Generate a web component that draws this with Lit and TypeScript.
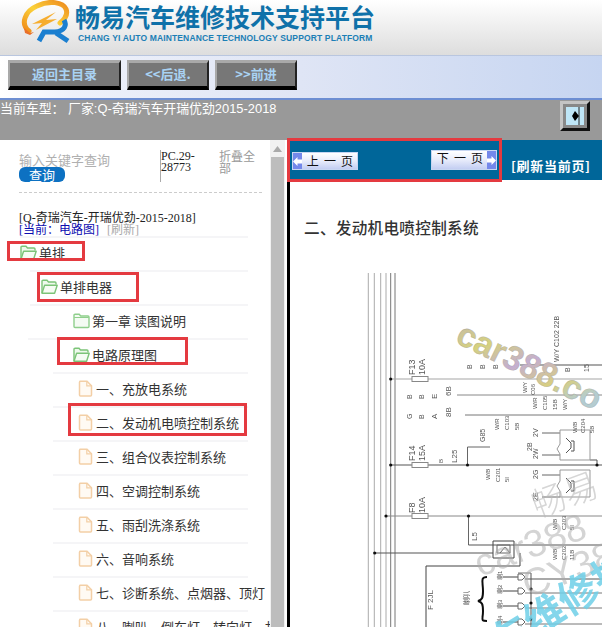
import { LitElement, html, css, svg } from "lit";
import { customElement } from "lit/decorators.js";

type Row = { t: string; kind: "open" | "closed" | "doc"; line: number; icon: number; red?: [number, number, number, number] };

const ROWS: Row[] = [
  { t: "单排", kind: "open", line: 20, icon: 19, red: [7, 5, 78, 20] },
  { t: "单排电器", kind: "open", line: 30, icon: 41, red: [37, 2, 102, 30] },
  { t: "第一章 读图说明", kind: "closed", line: 30, icon: 73 },
  { t: "电路原理图", kind: "open", line: 28, icon: 73, red: [57, -1, 131, 28] },
  { t: "一、充放电系统", kind: "doc", line: 53, icon: 77 },
  { t: "二、发动机电喷控制系统", kind: "doc", line: 53, icon: 77, red: [68, -3, 179, 33] },
  { t: "三、组合仪表控制系统", kind: "doc", line: 53, icon: 77 },
  { t: "四、空调控制系统", kind: "doc", line: 53, icon: 77 },
  { t: "五、雨刮洗涤系统", kind: "doc", line: 53, icon: 77 },
  { t: "六、音响系统", kind: "doc", line: 53, icon: 77 },
  { t: "七、诊断系统、点烟器、顶灯", kind: "doc", line: 53, icon: 77 },
  { t: "八、喇叭、倒车灯、转向灯、故障", kind: "doc", line: 53, icon: 77 },
];

const V_LINES = [368.3, 374.3, 380.7, 386, 390.7, 395];

// [x1, y1, x2, y2, stroke]
const WIRES: [number, number, number, number, string][] = [
  [390.7, 379, 602, 379, "#a5a5a5"],
  [457, 395, 602, 395, "#888"],
  [465, 415, 602, 415, "#777"],
  [520, 365, 602, 365, "#555"],
  [390.7, 465, 602, 465, "#555"],
  [386, 516, 602, 516, "#888"],
  [468.5, 516, 468.5, 545, "#666"],
  [468.5, 545, 602, 545, "#555"],
  [374.7, 553, 493, 553, "#555"],
  [467.5, 447, 467.5, 465, "#666"],
  [467.5, 447, 490, 447, "#666"],
  [542, 433, 560, 433, "#666"],
  [542, 455, 560, 455, "#666"],
  [542, 475, 560, 475, "#666"],
  [542, 497, 560, 497, "#666"],
  [597, 460, 597, 465, "#555"],
  [590, 460, 597, 460, "#555"],
  [503, 577, 518, 577, "#444"],
  [525, 579, 602, 579, "#555"],
  [503, 591, 518, 591, "#444"],
  [525, 593, 602, 593, "#777"],
  [503, 606, 518, 606, "#444"],
  [525, 608, 602, 608, "#777"],
  [503, 622, 518, 622, "#444"],
  [525, 624, 602, 624, "#777"],
  [531, 573, 531, 627, "#555"],
  [518, 573, 531, 573, "#777"],
];

const DOTS: [number, number][] = [
  [390.7, 379], [390.7, 465], [467.5, 465], [597, 465], [386, 516], [468.5, 516], [374.7, 553], [531, 589], [531, 603], [531, 619],
];

// [x, y, text, size]: labels that read upward, as on the drawing
const LABELS: [number, number, string, number][] = [
  [415, 375, "F13", 9], [425, 375, "10A", 9],
  [415, 461, "F14", 9], [425, 461, "15A", 9],
  [415, 513, "F8", 9], [425, 513, "10A", 9],
  [412, 399, "B", 7], [424, 399, "B", 7], [437, 399, "E", 8], [451, 396, "6B", 8],
  [412, 419, "G", 7], [424, 419, "B", 7], [437, 419, "A", 8], [451, 417, "8B", 8],
  [472, 369, "B", 7], [485, 369, "B", 7], [498, 369, "B", 7],
  [559, 362, "W/Y C102 22B", 7], [570, 372, "B", 7], [589, 372, "15", 7],
  [527, 393, "W/Y", 6], [535, 395, "C06", 6],
  [537, 409, "W/R", 6], [547, 410, "C105", 6], [557, 410, "15B", 6],
  [499, 430, "W/R", 6], [509, 430, "C103", 6], [519, 430, "5B", 6],
  [567, 410, "W/Y", 6], [577, 433, "W/B", 6], [585, 433, "C204", 6], [594, 433, "5B", 6],
  [485, 442, "G85", 7], [532, 451, "2B", 7],
  [538, 437, "2V", 7], [538, 459, "2W", 7], [538, 479, "2G", 7], [538, 501, "2E", 7],
  [490, 480, "W/B", 6], [500, 482, "C201", 6], [509, 482, "5I", 6],
  [457, 463, "L25", 8], [443, 463, "B", 6], [477, 541, "L5", 8],
  [557, 530, "W/B", 6], [566, 530, "C203", 6], [574, 530, "5I", 6],
  [557, 560, "W/B", 6], [566, 560, "C202", 6], [574, 560, "11B", 6],
  [433, 610, "F 2JL", 8], [469, 605, "喇叭", 7],
  [502, 580, "喇1", 6], [502, 594, "喇2", 6], [502, 609, "喇3", 6], [502, 625, "喇4", 6],
];

@customElement("app-root")
export class AppRoot extends LitElement {
  static styles = css`
    :host {
      display: block;
      width: 602px;
      height: 627px;
      overflow: hidden;
      background: #fff;
      font-family: "Noto Sans CJK SC", "Liberation Sans", sans-serif;
    }
    .header {
      height: 55px;
      display: flex;
      background: linear-gradient(#fff, #dddddd);
    }
    .logo { margin-left: 15px; flex: none; width: 60px; height: 45px; }
    .brand { display: flex; flex-direction: column; padding-top: 1px; }
    .brand-cn {
      font-size: 25px;
      line-height: 30px;
      font-weight: 700;
      color: #0f71a9;
      white-space: nowrap;
    }
    .brand-en {
      margin: 2px 0 0 3px;
      font: 700 8.5px/10px "Liberation Sans", sans-serif;
      color: #1c7fb6;
      letter-spacing: 0.14px;
      white-space: nowrap;
    }
    .toolbar {
      height: 43px;
      border-bottom: 2px solid #6d8ed2;
      display: flex;
      gap: 6px;
      padding-left: 8px;
      align-items: flex-start;
      background: linear-gradient(90deg, #fff 0%, #eef1fa 12%, #dfe5f5 50%, #c6d5f1 100%);
      box-shadow: inset 0 1px 0 #b9c6df;
    }
    .tbtn {
      margin-top: 5px;
      height: 30px;
      box-sizing: border-box;
      display: flex;
      align-items: center;
      justify-content: center;
      padding-bottom: 2px;
      background: #777;
      border-style: solid;
      border-width: 3px 2px 4px 2px;
      border-color: #a9a9a9 #222 #000 #a9a9a9;
      color: #a9d2f3;
      font-weight: 700;
      font-size: 13px;
    }
    .w1 { width: 113px; }
    .w2 { width: 82px; }
    .info {
      height: 40px;
      background: #999;
      display: flex;
      justify-content: space-between;
      align-items: flex-start;
    }
    .info-text {
      font: 12.9px/18px "Liberation Sans", "Noto Sans CJK SC", sans-serif;
      color: #fff;
      white-space: nowrap;
    }
    .toggle {
      margin: 1px 12px 0 0;
      width: 30px;
      height: 30px;
      box-sizing: border-box;
      border-style: solid;
      border-width: 3px;
      border-color: #c4c4c4 #111 #111 #c4c4c4;
      background: #888;
      padding: 3px;
    }
    .toggle svg { display: block; width: 18px; height: 18px; }
    .body { display: flex; height: 487px; }
    .left {
      width: 270px;
      flex: none;
      overflow: hidden;
      position: relative;
    }
    .search {
      display: flex;
      height: 32px;
      margin-top: 10px;
      padding-left: 19px;
    }
    .query { width: 141px; flex: none; }
    .ph { font-size: 13px; line-height: 14px; color: #b0b0b0; margin-top: 3px; }
    .qbtn {
      width: 46px;
      height: 15px;
      background: #0d71c2;
      border-radius: 6px;
      color: #fff;
      font-size: 13px;
      line-height: 15px;
      text-align: center;
    }
    .pc {
      width: 59px;
      flex: none;
      box-sizing: border-box;
      border-left: 1px solid #aaa;
      padding: 1px 0 0 0;
      font: 12px/11px "Liberation Serif", serif;
      color: #222;
    }
    .fold { width: 38px; font-size: 12px; line-height: 12px; color: #999; }
    .dash { margin: 10px 8px 0 19px; border-top: 1px dashed #ccc; }
    .path {
      margin: 19px 0 0 19px;
      font: 12px/12px "Liberation Serif", "Noto Sans CJK SC", serif;
      color: #222;
      white-space: nowrap;
      height: 24px;
    }
    .cur { color: #0c0cb0; }
    .ref { color: #aaa; margin-left: 8px; }
    .row {
      position: relative;
      height: 34px;
      box-sizing: border-box;
      border-top: 2px solid #f5f5f7;
      padding-bottom: 4px;
      margin-right: 22px;
      display: flex;
      align-items: center;
      gap: 2px;
      font-size: 13px;
      color: #333;
      white-space: nowrap;
    }
    .icon { flex: none; width: 17px; height: 17px; }
    .red {
      position: absolute;
      box-sizing: border-box;
      border: 3px solid #e43a40;
      pointer-events: none;
    }
    .scroll {
      width: 15px;
      flex: none;
      background: #f1f1f1;
      display: flex;
      flex-direction: column;
      align-items: stretch;
    }
    .arrow { height: 17px; display: flex; align-items: center; justify-content: center; }
    .arrow svg { width: 9px; height: 6px; }
    .thumb { flex: 1; background: #bdbdbd; margin: 0 1px; }
    .gap { width: 2px; flex: none; background: #fff; }
    .right {
      flex: 1;
      min-width: 0;
      border-left: 3px solid #000;
    }
    .bar {
      position: relative;
      height: 40px;
      background: #006699;
      display: flex;
      align-items: flex-start;
    }
    .bar-red {
      position: absolute;
      left: -3px;
      top: -2px;
      width: 215px;
      height: 44px;
      box-sizing: border-box;
      border: 3px solid #e43a40;
    }
    .pg {
      box-sizing: border-box;
      width: 66px;
      display: flex;
      align-items: stretch;
      background: linear-gradient(#fff, #e8ecfb 50%, #c3cef2);
      border: 1px solid #c7d6f2;
      font-size: 12px;
      line-height: 16px;
      color: #111;
      white-space: nowrap;
    }
    .pg-prev { margin: 12px 0 0 2px; height: 18px; }
    .pg-next { margin: 10px 0 0 73px; height: 20px; }
    .pg-label { flex: 1; text-align: center; letter-spacing: 1.2px; padding-left: 2px; }
    .pg-next .pg-label { line-height: 14px; }
    .pg-a {
      width: 9px;
      flex: none;
      background: #7488ea;
      display: flex;
      align-items: center;
      justify-content: center;
    }
    .pg-a svg { width: 9px; height: 9px; }
    .reload {
      margin: 17px 0 0 14px;
      font-size: 13px;
      line-height: 17px;
      font-weight: 700;
      letter-spacing: 0.7px;
      color: #fff;
      white-space: nowrap;
    }
    .title {
      margin: 35px 0 0 14px;
      height: 24px;
      font-size: 15.6px;
      line-height: 24px;
      font-weight: 500;
      letter-spacing: 0.3px;
      color: #333;
      white-space: nowrap;
    }
    .diagram {
      display: block;
      margin: 31px 0 0 50px;
      width: 262px;
      height: 357px;
    }
  `;

  private icon(kind: Row["kind"]) {
    if (kind === "doc") {
      return html`<svg class="icon" viewBox="0 0 17 17" fill="none">
        <path d="M2.5 1.2h7.5l4.5 4.5v9.3a1 1 0 0 1-1 1h-10a1 1 0 0 1-1-1V2.2a1 1 0 0 1 1-1Z" fill="#fffaf3" stroke="#f3cfa6" stroke-width="1.5"/>
        <path d="M9.8 1.4v4.4h4.5" stroke="#f3cfa6" stroke-width="1.2"/>
      </svg>`;
    }
    if (kind === "closed") {
      return html`<svg class="icon" viewBox="0 0 17 17" fill="none">
        <path d="M1 14.5V3.2A1 1 0 0 1 2 2.2h4.2l1.5 1.8H15a1 1 0 0 1 1 1v9.5a1 1 0 0 1-1 1H2a1 1 0 0 1-1-1Z" fill="#f4fbf3" stroke="#8fcf8c" stroke-width="1.4"/>
        <path d="M1.2 5.5h14.6" stroke="#8fcf8c"/>
      </svg>`;
    }
    return html`<svg class="icon" viewBox="0 0 17 17" fill="none">
      <path d="M1 15V3.2a1 1 0 0 1 1-1h4l1.5 1.8H14a1 1 0 0 1 1 1v1.6" fill="#eef9ec" stroke="#7cc478" stroke-width="1.4"/>
      <path d="M1 15.2 3.6 7.2h12.6l-2.6 8Z" fill="#f6fcf4" stroke="#7cc478" stroke-width="1.4" stroke-linejoin="round"/>
    </svg>`;
  }

  private diagram() {
    return html`<svg class="diagram" viewBox="340 270 262 357" aria-label="电路图">
      <defs>
        <linearGradient id="wm" x1="0" x2="1" y1="0" y2="0.25">
          <stop offset="0" stop-color="#c4b8ae"/>
          <stop offset="0.3" stop-color="#d6d27e"/>
          <stop offset="0.55" stop-color="#c4aed0"/>
          <stop offset="0.8" stop-color="#d8cf80"/>
          <stop offset="1" stop-color="#b4ccd0"/>
        </linearGradient>
        <filter id="soft" x="-5%" y="-5%" width="110%" height="110%"><feGaussianBlur stdDeviation="0.45"/></filter>
      </defs>
      <g filter="url(#soft)">
        ${V_LINES.map((x, i) => svg`<line x1=${x} y1="273" x2=${x} y2="627" stroke=${i > 3 ? "#777" : "#aaa"} stroke-width="1"/>`)}
        ${WIRES.map(([a, b, c, d, s]) => svg`<line x1=${a} y1=${b} x2=${c} y2=${d} stroke=${s} stroke-width="1"/>`)}
        ${DOTS.map(([x, y]) => svg`<circle cx=${x} cy=${y} r="1.6" fill="#111"/>`)}
        <g fill="#fff" stroke="#888">
          <rect x="412" y="376.5" width="16" height="5"/>
          <rect x="412" y="462.5" width="16" height="5"/>
          <rect x="412" y="513.5" width="16" height="5"/>
        </g>
        <g fill="none" stroke="#777">
          <path d="M560 430h30v30h-30v-6l-3-5 3-5Z" stroke="#999"/>
          <path d="M560 470h30v27h-30v-6l-3-5 3-5Z" stroke="#999"/>
          <path d="M566 478l5 5v5l-5 5M571 481h3v10h-3" stroke="#555"/>
          <path d="M566 438l5 5v5l-5 5M571 441h3v10h-3" stroke="#555"/>
          <path d="M493 541h21v17h-21Z" stroke="#444"/>
          <path d="M497 545h13v8h-13ZM500 553l5-6 5 6" stroke="#666"/>
          <path d="M520 553v13h-94v61" stroke="#444"/>
          <path d="M487 577c-7 0-4 5-4 14 0 7-1 9-5 10 4 1 5 3 5 10 0 9-3 10 4 10" stroke="#111" stroke-width="2"/>
          <path d="M518 574h4l3 3-3 3h-4ZM518 588h4l3 3-3 3h-4ZM518 603h4l3 3-3 3h-4ZM518 619h4l3 3-3 3h-4Z" stroke="#666"/>
        </g>
        <g font-family="'Liberation Sans','Noto Sans CJK SC',sans-serif" fill="#555">
          ${LABELS.map(([x, y, t, s]) => svg`<text transform=${`translate(${x} ${y}) rotate(-90)`} font-size=${s}>${t}</text>`)}
        </g>
      </g>
      <text transform="translate(454 342) rotate(26)" font-family="'Liberation Sans',sans-serif" font-size="34" font-weight="700" fill="url(#wm)" stroke="#8a8a8a" stroke-opacity=".4" stroke-width=".6">car388.co</text>
      <text transform="translate(537 518) rotate(-20)" font-family="'Noto Sans CJK SC',sans-serif" font-size="34" font-weight="300" fill="#bbb" opacity=".6">畅易</text>
      <text transform="translate(480 577) rotate(-20)" font-family="'Liberation Sans',sans-serif" font-size="38" fill="#aaa" opacity=".5">car388</text>
      <text transform="translate(528 598) rotate(-20)" font-family="'Liberation Sans',sans-serif" font-size="38" fill="#aaa" opacity=".5">CY38</text>
      <text transform="translate(501 659) rotate(-32)" font-family="'Noto Sans CJK SC',sans-serif" font-size="40" font-weight="700" fill="#6fd0e8" opacity=".85">车维修技</text>
    </svg>`;
  }

  render() {
    return html`
      <div class="header">
        <svg class="logo" viewBox="0 0 60 45">
          <defs>
            <linearGradient id="ring" x1="0" x2="1" y1="1" y2="0">
              <stop offset="0" stop-color="#f08a18"/>
              <stop offset="0.5" stop-color="#fbd23a"/>
              <stop offset="1" stop-color="#ee8c1e"/>
            </linearGradient>
          </defs>
          <path d="M14 31C5 24 10 11 22 6 34 0 48 2 51 9c2 5-1 10-6 14" fill="none" stroke="url(#ring)" stroke-width="5" stroke-linecap="round"/>
          <path d="M9 28l6 5 4-1-4 3-5-2Z" fill="#e9702a"/>
          <path d="M41 12 17 24l10-1-6 7 21-11-11 1Z" fill="#f6ad2e"/>
          <path d="M24 41l5-9h11c10-1 12-7 9-12" fill="none" stroke="#1b7fd0" stroke-width="5"/>
          <path d="M41 33l12 8" fill="none" stroke="#1b7fd0" stroke-width="5"/>
        </svg>
        <div class="brand">
          <div class="brand-cn">畅易汽车维修技术支持平台</div>
          <div class="brand-en">CHANG YI AUTO MAINTENANCE TECHNOLOGY SUPPORT PLATFORM</div>
        </div>
      </div>
      <div class="toolbar">
        <div class="tbtn w1">返回主目录</div>
        <div class="tbtn w2">&lt;&lt;后退.</div>
        <div class="tbtn w2">&gt;&gt;前进</div>
      </div>
      <div class="info">
        <div class="info-text">当前车型： 厂家:Q-奇瑞汽车开瑞优劲2015-2018</div>
        <div class="toggle">
          <svg viewBox="0 0 18 18">
            <rect width="18" height="18" fill="#bfe6f7"/>
            <path d="M13 0v18" stroke="#222" stroke-width="1"/>
            <path d="M9 4l4 5-4 5-3-5Z" fill="#000"/>
          </svg>
        </div>
      </div>
      <div class="body">
        <div class="left">
          <div class="search">
            <div class="query">
              <div class="ph">输入关键字查询</div>
              <div class="qbtn">查询</div>
            </div>
            <div class="pc">PC.29-<br />28773</div>
            <div class="fold">折叠全部</div>
          </div>
          <div class="dash"></div>
          <div class="path">
            <div>[Q-奇瑞汽车-开瑞优劲-2015-2018]</div>
            <div><span class="cur">[当前：电路图]</span><span class="ref">[刷新]</span></div>
          </div>
          ${ROWS.map(
            (r) => html`<div class="row" style="margin-left:${r.line}px;padding-left:${r.icon - r.line}px">
              ${this.icon(r.kind)}<span>${r.t}</span>
              ${r.red
                ? html`<div class="red" style="left:${r.red[0] - r.line}px;top:${r.red[1] - 2}px;width:${r.red[2]}px;height:${r.red[3]}px"></div>`
                : ""}
            </div>`
          )}
        </div>
        <div class="scroll">
          <div class="arrow"><svg viewBox="0 0 9 6"><path d="M4.5 0 9 6H0Z" fill="#aaa"/></svg></div>
          <div class="thumb"></div>
        </div>
        <div class="gap"></div>
        <div class="right">
          <div class="bar">
            <div class="pg pg-prev">
              <div class="pg-a"><svg viewBox="0 0 9 9"><path d="M0 4.5 4.5 0v2.5H9v4H4.5V9Z" fill="#fff"/></svg></div>
              <div class="pg-label">上 一 页</div>
            </div>
            <div class="pg pg-next">
              <div class="pg-label">下 一 页</div>
              <div class="pg-a"><svg viewBox="0 0 9 9"><path d="M9 4.5 4.5 0v2.5H0v4h4.5V9Z" fill="#fff"/></svg></div>
            </div>
            <div class="reload">[刷新当前页]</div>
            <div class="bar-red"></div>
          </div>
          <div class="title">二、发动机电喷控制系统</div>
          ${this.diagram()}
        </div>
      </div>
    `;
  }
}
